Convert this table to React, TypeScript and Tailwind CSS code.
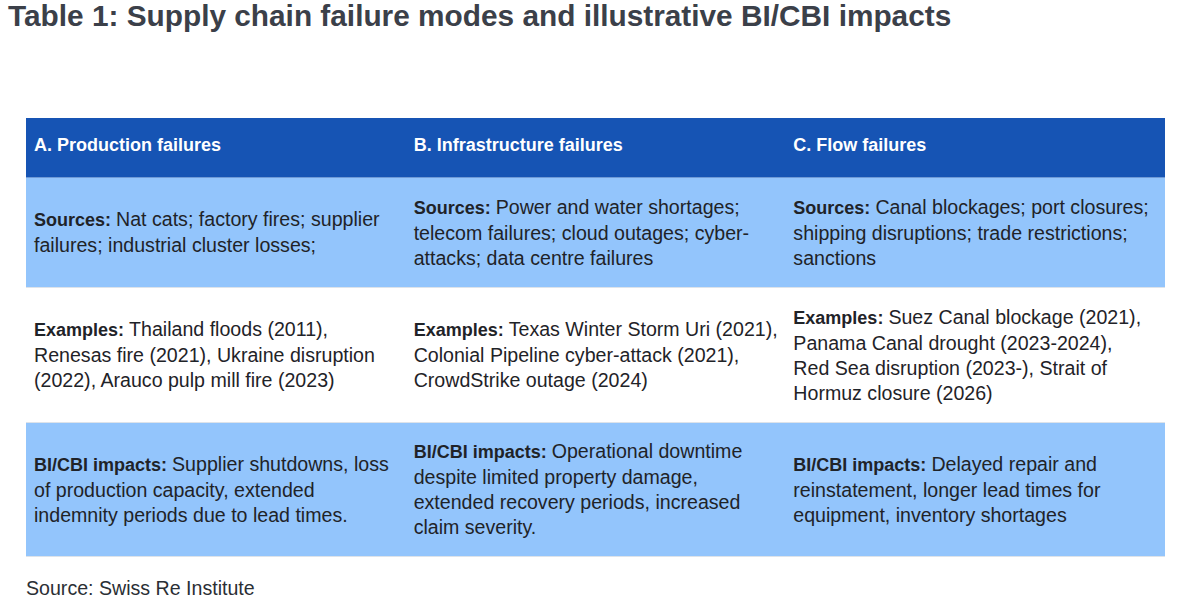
// each cell: bold label, then the text already broken into the lines the figure shows
type Cell = { label: string; lines: string[] };

const ROWS: { bg: string; h: string; cells: Cell[] }[] = [
  {
    bg: 'bg-[#93c5fc]',
    h: 'h-[110px]',
    cells: [
      { label: 'Sources:', lines: ['Nat cats; factory fires; supplier', 'failures; industrial cluster losses;'] },
      { label: 'Sources:', lines: ['Power and water shortages;', 'telecom failures; cloud outages; cyber-', 'attacks; data centre failures'] },
      { label: 'Sources:', lines: ['Canal blockages; port closures;', 'shipping disruptions; trade restrictions;', 'sanctions'] },
    ],
  },
  {
    bg: 'bg-white',
    h: 'h-[135px]',
    cells: [
      { label: 'Examples:', lines: ['Thailand floods (2011),', 'Renesas fire (2021), Ukraine disruption', '(2022), Arauco pulp mill fire (2023)'] },
      { label: 'Examples:', lines: ['Texas Winter Storm Uri (2021),', 'Colonial Pipeline cyber-attack (2021),', 'CrowdStrike outage (2024)'] },
      { label: 'Examples:', lines: ['Suez Canal blockage (2021),', 'Panama Canal drought (2023-2024),', 'Red Sea disruption (2023-), Strait of', 'Hormuz closure (2026)'] },
    ],
  },
  {
    bg: 'bg-[#93c5fc]',
    h: 'h-[134px]',
    cells: [
      { label: 'BI/CBI impacts:', lines: ['Supplier shutdowns, loss', 'of production capacity, extended', 'indemnity periods due to lead times.'] },
      { label: 'BI/CBI impacts:', lines: ['Operational downtime', 'despite limited property damage,', 'extended recovery periods, increased', 'claim severity.'] },
      { label: 'BI/CBI impacts:', lines: ['Delayed repair and', 'reinstatement, longer lead times for', 'equipment, inventory shortages'] },
    ],
  },
];

const HEADERS = ['A. Production failures', 'B. Infrastructure failures', 'C. Flow failures'];

export default function App() {
  return (
    <div className="w-[1200px] h-[600px] bg-white font-['Liberation_Sans',Arial,sans-serif] text-[#1f2328] overflow-hidden">
      <h1 className="pl-2 text-[29.8px] leading-[32px] font-bold text-[#3b4049] whitespace-nowrap">
        Table 1: Supply chain failure modes and illustrative BI/CBI impacts
      </h1>

      <div className="ml-[26px] mt-[86px] w-[1139px]">
        <div className="grid grid-cols-3 h-[60px] bg-[#1654b4] border-b border-[#6f9ad6]">
          {HEADERS.map((t) => (
            <div key={t} className="flex items-center px-2 pb-[4px] text-white font-bold text-[18px]">{t}</div>
          ))}
        </div>
        {ROWS.map((r, i) => (
          <div key={i} className={`grid grid-cols-3 ${r.h} ${r.bg} border-b border-[#dde3ea]`}>
            {r.cells.map((c, j) => (
              <div key={j} className="flex items-center px-2 text-[19.6px] leading-[25px] whitespace-nowrap">
                <div>
                  {c.lines.map((l, k) => (
                    <div key={k}>
                      {k === 0 && <span className="font-bold text-[18px]">{c.label} </span>}
                      {l}
                    </div>
                  ))}
                </div>
              </div>
            ))}
          </div>
        ))}
      </div>

      <p className="ml-[26px] mt-[19px] text-[19.6px] leading-[25px] text-[#2b2f35]">Source: Swiss Re Institute</p>
    </div>
  );
}
